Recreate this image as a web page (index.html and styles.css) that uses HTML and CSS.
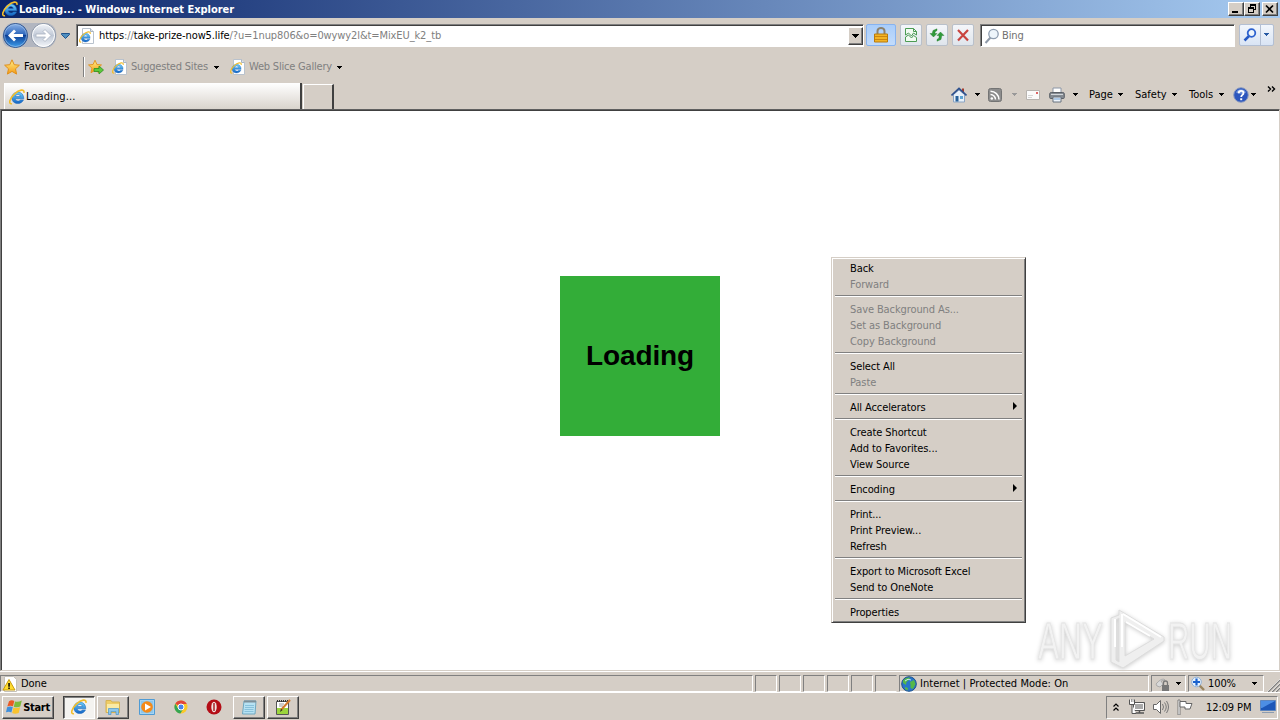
FILE: index.html
```
<!DOCTYPE html>
<html lang="en">
<head>
    <meta charset="UTF-8">
    <title>Loading... - Windows Internet Explorer</title>
    <link rel="stylesheet" href="styles.css">
</head>
<body>
    <svg class="defs" width="0" height="0">
        <defs>
            <linearGradient id="g-blue" x1="0" y1="0" x2="0" y2="1">
                <stop offset="0" stop-color="#8fb4e8"/><stop offset=".45" stop-color="#2f68bd"/><stop offset=".5" stop-color="#0d3f95"/><stop offset="1" stop-color="#3fa0ee"/>
            </linearGradient>
            <linearGradient id="g-grey" x1="0" y1="0" x2="0" y2="1">
                <stop offset="0" stop-color="#f4f6fa"/><stop offset=".5" stop-color="#bfc8d6"/><stop offset="1" stop-color="#f6f8fb"/>
            </linearGradient>
            <linearGradient id="g-gold" x1="0" y1="0" x2="0" y2="1">
                <stop offset="0" stop-color="#fff08a"/><stop offset="1" stop-color="#f59a12"/>
            </linearGradient>
            <linearGradient id="g-ie" x1="0" y1="0" x2="0" y2="1">
                <stop offset="0" stop-color="#6fd0fa"/><stop offset="1" stop-color="#1263c4"/>
            </linearGradient>
        </defs>
        <symbol id="ie" viewBox="0 0 16 16">
            <path fill-rule="evenodd" d="M14.800 9.800H6.300c.2 2.500 4 3 5 1.100h3.200C12.500 16 3.400 16 2.800 9.300 2.500 1.500 14.800.3 14.800 9.800zM6.300 7.500h5c-.3-2.700-4.500-2.700-5 0z" fill="url(#g-ie)" stroke="#1a66b8" stroke-width=".5"/>
            <path d="M3 14.700C-1 15.600.6 9.400 5.600 4.800 10 .8 15.800-.6 14.900 3.800" fill="none" stroke="#f2bd2c" stroke-width="1.600"/>
        </symbol>
        <symbol id="iepage" viewBox="0 0 16 16">
            <path d="M3.500.5h8l3 3v12h-11z" fill="#fff" stroke="#b9c2cd"/>
            <path d="M11.500.5v3h3" fill="#dde4ec" stroke="#a9b4c2"/>
            <use href="#ie" x="0" y="3" width="12" height="12"/>
        </symbol>
        <symbol id="star" viewBox="0 0 16 16">
            <path d="M8 .8l2.200 4.900 5.200.5-3.900 3.600 1.100 5.300L8 12.400l-4.600 2.700 1.100-5.300L.6 6.200l5.200-.5z" fill="url(#g-gold)" stroke="#e08f1a"/>
        </symbol>
        <symbol id="down" viewBox="0 0 5 3"><path d="M0 0h5v1H4v1H3v1H2V2H1V1H0z" fill="currentColor"/></symbol>
    </svg>

    <div class="titlebar">
        <svg class="i16"><use href="#ie"/></svg>
        <span class="title-text">Loading... - Windows Internet Explorer</span>
        <div class="win-buttons">
            <button class="win-btn"><svg width="12" height="10"><path d="M2 7h6v2H2z"/></svg></button>
            <button class="win-btn"><svg width="12" height="10"><path d="M4 0h6v6H8V5h1V2H5v1H4zM2 3h6v6H2zM3 5v3h4V5z" fill-rule="evenodd"/></svg></button>
            <button class="win-btn close"><svg width="12" height="10"><path d="M2 1.500l7 7M9 1.500l-7 7" stroke="#000" stroke-width="1.700"/></svg></button>
        </div>
    </div>

    <div class="navbar">
        <svg class="travel" width="76" height="30" viewBox="0 0 76 30">
            <path d="M13 3H45c15 0 14 21 4 24H10C-2 27 1 3 13 3z" fill="#b2b6c0"/>
            <circle cx="15.500" cy="15.500" r="12" fill="url(#g-blue)" stroke="#33568f"/>
            <circle cx="15.500" cy="15.500" r="11" fill="none" stroke="#a9c9ee" opacity=".6"/>
            <path d="M8 15.500l6-6 2 2-2.500 2.500H23v3h-9.500L16 19.500l-2 2z" fill="#fff"/>
            <circle cx="43.500" cy="15.500" r="12" fill="url(#g-grey)" stroke="#8b95a6"/>
            <circle cx="43.500" cy="15.500" r="11" fill="none" stroke="#fff"/>
            <path d="M51 15.500l-6-6-2 2 2.500 2.500H36v3h9.500L43 19.500l2 2z" fill="#fff" stroke="#a9b2c0" stroke-width=".8"/>
            <path d="M61.500 13.500h8v1l-4 4-4-4z" fill="#4f8fc0" stroke="#20538c"/>
        </svg>
        <div class="field address">
            <svg class="i16"><use href="#iepage"/></svg>
            <span class="url">https<i>://</i>take-prize-now5.life<i class="query">/?u=1nup806&amp;o=0wywy2l&amp;t=MixEU_k2_tb</i></span>
            <button class="drop"><svg width="7" height="4"><path d="M0 0h7v1H6v1H5v1H4v1H3V3H2V2H1V1H0z"/></svg></button>
        </div>
        <button class="tool lock">
            <svg class="i16" viewBox="0 0 16 16"><path d="M4.500 8V4a3.500 3 0 0 1 7 0V8" fill="none" stroke="#8c826e" stroke-width="2"/><path d="M1.500 7h13v8h-13z" fill="#f3b424" stroke="#b97a0c"/><path d="M2 9.500h12M2 12.500h12" stroke="#ca8510"/></svg>
        </button>
        <button class="tool">
            <svg class="i16" viewBox="0 0 16 16"><path d="M2.500 8V1.500h8l3 3V8l-3-2-2 3-3-3zM2.500 10l3-2 3 3 2-2.500 3 2v4h-11z" fill="#f2fbf2" stroke="#4c9c54"/><path d="M10.500 1.500v3h3" fill="none" stroke="#4c9c54"/></svg>
        </button>
        <button class="tool">
            <svg class="i16" viewBox="0 0 16 16"><path d="M1 6.500L4.500 10 8 6.500H6V5l2-1.500V1.800L4 3.500 3.200 6.500zM15 8.500L11.500 5 8 8.500h2V11l-2 1.500v1.700l4-1.700.8-4z" fill="#2f9a3a" stroke="#237a2c" stroke-width=".4"/></svg>
        </button>
        <button class="tool">
            <svg class="i16" viewBox="0 0 16 16"><path d="M3 3l10 10.500M13 3L3 13.500" stroke="#c9443f" stroke-width="2.200"/></svg>
        </button>
        <div class="field search">
            <svg class="i16" viewBox="0 0 16 16"><path d="M6.500 9.500L1.500 15" stroke="#8e99a8" stroke-width="2"/><circle cx="9.500" cy="6" r="4.700" fill="#eef5fb" stroke="#8e9db0" stroke-width="1.300"/></svg>
            <span>Bing</span>
        </div>
        <div class="go">
            <svg class="i16" viewBox="0 0 16 16"><path d="M7 9l-4.500 4.500" stroke="#2659c3" stroke-width="2.500"/><circle cx="9.500" cy="6" r="3.800" fill="#eef5fb" stroke="#2d62cf" stroke-width="1.800"/></svg>
            <span class="go-drop"><svg class="arr"><use href="#down"/></svg></span>
        </div>
    </div>

    <div class="favbar">
        <svg class="i16"><use href="#star"/></svg>
        <span class="fav-label">Favorites</span>
        <span class="divider"></span>
        <svg class="i16" viewBox="0 0 16 16"><use href="#star" width="14" height="15"/><path d="M6 9.500h5V7l4.500 4-4.500 4v-2.500H6z" fill="#5cc93c" stroke="#2d8f1f" stroke-width=".8"/></svg>
        <svg class="i16 fav-ico"><use href="#iepage"/></svg>
        <span class="fav-link sites">Suggested Sites</span>
        <svg class="arr"><use href="#down"/></svg>
        <svg class="i16 fav-ico2"><use href="#iepage"/></svg>
        <span class="fav-link slices">Web Slice Gallery</span>
        <svg class="arr"><use href="#down"/></svg>
    </div>

    <div class="tabrow">
        <div class="tab"><svg class="i16"><use href="#ie"/></svg><span>Loading...</span></div>
        <div class="newtab"></div>
        <div class="commands">
            <svg class="i16" viewBox="0 0 16 16"><path d="M11 1.500h2v5h-2z" fill="#a33b2c"/><path d="M2.500 7.500L8 3l5.500 4.500v7.500h-11z" fill="#e8f1fa" stroke="#8ba4c4"/><path d="M.5 8.500L8 1.500l7.500 7" fill="none" stroke="#2c4f8d" stroke-width="1.700"/><path d="M4.500 9h3v5.500h-3z" fill="#27609a"/><path d="M9 9h3v3H9z" fill="#5ea4d4"/></svg>
            <svg class="arr a-home"><use href="#down"/></svg>
            <svg class="i16 rss" viewBox="0 0 16 16"><rect x="1.500" y="1.500" width="13" height="13" rx="2" fill="#8d8d8d" stroke="#747474"/><circle cx="4.800" cy="11.500" r="1.300" fill="#fff"/><path d="M3.500 7.500a5 5 0 0 1 5 5M3.500 4.200a8.500 8.500 0 0 1 8.500 8.300" fill="none" stroke="#fff" stroke-width="1.500"/></svg>
            <svg class="arr a-rss"><use href="#down"/></svg>
            <svg class="i16 mail" viewBox="0 0 16 16"><path d="M1.500 3.500h13v9h-13z" fill="#fbfbfb" stroke="#b8b4b0"/><path d="M11 5h2v2h-2z" fill="#d66"/><path d="M3 8.500h5M3 10.500h4" stroke="#d5d5d5"/></svg>
            <svg class="i16 printer" viewBox="0 0 16 16"><path d="M4 1h8v5H4z" fill="#fff" stroke="#8b96a6"/><path d="M.7 7q0-1.500 1.500-1.500h11.600q1.500 0 1.500 1.500v3.500q0 1-1 1H1.700q-1 0-1-1z" fill="#858b92" stroke="#5b6067"/><path d="M2 7.500h12" stroke="#d3d7db"/><path d="M4 10h8v5H4z" fill="#eef4fb" stroke="#68727e"/><path d="M5 12h6" stroke="#6c9fd4"/></svg>
            <svg class="arr a-print"><use href="#down"/></svg>
            <span class="cmd page">Page</span><svg class="arr"><use href="#down"/></svg>
            <span class="cmd safety">Safety</span><svg class="arr"><use href="#down"/></svg>
            <span class="cmd tools">Tools</span><svg class="arr"><use href="#down"/></svg>
            <svg class="i16 help" viewBox="0 0 16 16"><circle cx="8" cy="8" r="7.300" fill="#2c56bd" stroke="#8d9cc0"/><path d="M3 5.500a5.500 5.500 0 0 1 10 0Q8 8 3 5.500z" fill="#7598dd"/><path d="M5.700 6.200c0-3.300 4.800-3 4.800-.3C10.500 8 8.200 7.700 8.200 10" fill="none" stroke="#fff" stroke-width="1.800"/><path d="M7.200 11.300h2v1.900h-2z" fill="#fff"/></svg>
            <svg class="arr a-help"><use href="#down"/></svg>
            <svg class="more" width="9" height="6"><path d="M1 .5L3.500 3 1 5.500M5 .5L7.500 3 5 5.500" fill="none" stroke="#000" stroke-width="1.400"/></svg>
        </div>
    </div>

    <div class="viewport">
        <div class="loading">Loading</div>
        <svg class="watermark" width="220" height="70" viewBox="0 0 220 70">
            <g class="wm-text"><text x="3" y="54" textLength="65" lengthAdjust="spacingAndGlyphs">ANY</text><text x="133" y="54" textLength="64" lengthAdjust="spacingAndGlyphs">RUN</text></g>
            <path class="wm-mark" d="M84 5l45 27v4L88 63l-4-2-8-4V13l8-3zM90 17v34l29-17zM81 15v40l3 2V13z"/>
            <path class="wm-light" d="M80 14v28M87 9v33M88 9l38 23M91 17l24 14"/>
        </svg>
    </div>

    <div class="statusbar">
        <div class="pane done">
            <svg class="i16" viewBox="0 0 16 16"><path d="M2.500.5h9l3 3v12h-12z" fill="#fff" stroke="#c5c1b8"/><path d="M7 3.500l6 10.500H1z" fill="#ffdc2e" stroke="#c89b0c"/><path d="M6.300 7h1.500v3.800H6.300zM6.300 11.500h1.500V13H6.300z"/></svg>
            <span>Done</span>
        </div>
        <div class="pane small"></div>
        <div class="pane small"></div>
        <div class="pane small"></div>
        <div class="pane small"></div>
        <div class="pane small"></div>
        <div class="pane small last"></div>
        <div class="pane zone">
            <svg class="i16" viewBox="0 0 16 16"><circle cx="8" cy="8" r="7.300" fill="#2876c9" stroke="#1c4f8c"/><path d="M2 4.500Q5 1 9 1.500L8 4 5.500 6 5 9 2 7zM9 6l4-2 1.500 4-2.500 5-2.500-1V9zM4 11l3 1-.5 2.500L4 13z" fill="#55b848"/><path d="M4 5q3-3 6-1" fill="none" stroke="#c4e9f4"/></svg>
            <span>Internet | Protected Mode: On</span>
        </div>
        <div class="pane filter">
            <svg class="i16" viewBox="0 0 16 16"><path d="M1 8q6-7 9-4l-4 1 2 3-3 3-3-1z" fill="#d9d9d9" stroke="#999" stroke-width=".7"/><path d="M8.500 9V7a2 2 0 0 1 4 0v2" fill="none" stroke="#777" stroke-width="1.300"/><path d="M7 9h7v6H7z" fill="#777"/></svg>
            <svg class="arr"><use href="#down"/></svg>
        </div>
        <div class="pane zoom">
            <svg class="i16" viewBox="0 0 16 16"><path d="M9 9l5 5" stroke="#9a8560" stroke-width="2.400"/><circle cx="6.500" cy="6" r="4.800" fill="#e8f3fd" stroke="#8fb0d6"/><path d="M6.500 2.500v7M3 6h7" stroke="#1a62cd" stroke-width="2.200"/></svg>
            <span>100%</span>
            <svg class="arr"><use href="#down"/></svg>
        </div>
        <svg class="grip" width="13" height="13"><path d="M1 13L13 1M5 13l8-8M9 13l4-4" stroke="#808080" stroke-width="1.500"/><path d="M0 13L13 0M4 13l9-9M8 13l5-5" stroke="#fff" stroke-width=".6"/></svg>
    </div>

    <div class="taskbar">
        <button class="task start">
            <svg class="i16" viewBox="0 0 16 16"><path d="M3 2.300Q5.500.3 8.300 2L7 7.200Q4 6 1.300 7.500z" fill="#ea5a25"/><path d="M9 2.400Q12 3.500 15.800 1.500L14.300 7.500Q11 9 7.800 7.700z" fill="#7dbb3c"/><path d="M1.100 8.300Q4 6.800 6.800 8L5.400 13.500Q3 12 0 13.300z" fill="#3f8fdc"/><path d="M7.500 8.500Q10.500 9.800 14.100 8.300L12.700 14Q9 15.500 6.200 14z" fill="#f9c32f"/></svg>
            <b>Start</b>
        </button>
        <button class="task pressed"><svg class="i16"><use href="#ie"/></svg></button>
        <button class="task folder"><svg class="i16" viewBox="0 0 16 16"><path d="M1 1.500h5l1 1.500h7.500v10.500H1z" fill="#efcd66" stroke="#d5b253"/><path d="M2 5h12v8H2z" fill="#faeaa5"/><path d="M3.500 15.500V9.500h10v6h-2.500v-3H6v3z" fill="#8cc7ec" stroke="#4a93c8" stroke-width=".7"/></svg></button>
        <svg class="i16 media" viewBox="0 0 16 16"><path d="M.5.5h15v15H.5z" fill="#a5d4f3" stroke="#4f9bd4"/><path d="M2 2h12v12H2z" fill="#8cc6ec"/><circle cx="8" cy="8" r="5.800" fill="#f48a19"/><path d="M6 4.500L12 8l-6 3.500z" fill="#fff"/></svg>
        <svg class="i16 chrome" viewBox="0 0 16 16"><circle cx="8" cy="8" r="6.500" fill="#fbc928"/><path d="M8 8L2.300 4.700A6.500 6.500 0 0 1 13.800 5H8z" fill="#e2453a"/><path d="M2.300 4.700A6.500 6.500 0 0 0 7.400 14.500L10.500 9.500 8 11 5.300 9.700z" fill="#35a553"/><circle cx="8" cy="8" r="3" fill="#4a84ec" stroke="#fff"/></svg>
        <svg class="i16 opera" viewBox="0 0 16 16"><circle cx="8" cy="8" r="7.500" fill="#b40d16"/><ellipse cx="8" cy="8" rx="2.700" ry="5.300" fill="#f0e4e2"/><path d="M7.300 4h1.400v8H7.300z" fill="#a5131b"/></svg>
        <button class="task notepad"><svg class="i16" viewBox="0 0 16 16"><path d="M3 2h12l-1 13H1.500z" fill="#b7e2f3" stroke="#6fa7c0"/><path d="M3 1.500h12v2H3z" fill="#7e8f98"/><path d="M4 6.500h9M4 8.500h9M3.500 10.500h9M3.500 12.500h9" stroke="#74b3d0" stroke-width=".7"/></svg></button>
        <button class="task npp"><svg class="i16" viewBox="0 0 16 16"><path d="M1.500 2.500h12v13h-12z" fill="#fff" stroke="#555"/><path d="M2 9h11v6H2z" fill="#9bd43c"/><path d="M2 2h11" stroke="#333" stroke-dasharray="1 1" stroke-width="2"/><path d="M4 5h5M4 7h4" stroke="#999"/><path d="M6 11L15 1" stroke="#d2792b" stroke-width="2"/><path d="M5 13l1-3 1.500 1z" fill="#222"/></svg></button>
        <div class="tray">
            <svg class="chev" width="6" height="8"><path d="M.5 3.500L3 1l2.500 2.500M.5 7.500L3 5l2.500 2.500" fill="none" stroke="#000" stroke-width="1.200"/></svg>
            <svg class="i16 net" viewBox="0 0 16 16"><path d="M4.500 3.500h11v8h-11z" fill="#888" stroke="#555"/><path d="M5.500 4.500h9v6h-9z" fill="#aaa" stroke="#fff"/><path d="M6 14h9M10.500 12v2" stroke="#555" stroke-width="1.500"/><path d="M.5.5v5h5v-5M3 5v9.500h4" fill="#fff" stroke="#555"/><path d="M2.500 0v3M4 0v3" stroke="#777" stroke-width=".7"/></svg>
            <svg class="i16 vol" viewBox="0 0 16 16"><path d="M.5 5.500h3l4-4v13l-4-4h-3z" fill="#fff" stroke="#666"/><path d="M9.500 5q2 3 0 6M11.500 3.500q3.500 4.500 0 9M13.500 2q4 6 0 12" fill="none" stroke="#777"/></svg>
            <svg class="i16 flag" viewBox="0 0 16 16"><path d="M1 1h2v15H1z" fill="#fff" stroke="#666" stroke-width=".8"/><path d="M3 2.500h6v2h6l-2 5.500H8V8H3z" fill="#fff" stroke="#666"/></svg>
            <span class="clock">12:09 PM</span>
            <svg class="i16" viewBox="0 0 16 16"><path d="M.5 1.500h15v10H.5z" fill="#1d57b8" stroke="#5f86bd"/><path d="M1 2h14L2 9H1z" fill="#4d8ee4"/><path d="M2 13.500h12" stroke="#8c9cb0"/></svg>
        </div>
    </div>

    <div class="menu">
        <div class="item">Back</div>
        <div class="item off">Forward</div>
        <hr>
        <div class="item off">Save Background As...</div>
        <div class="item off">Set as Background</div>
        <div class="item off">Copy Background</div>
        <hr>
        <div class="item">Select All</div>
        <div class="item off">Paste</div>
        <hr>
        <div class="item sub">All Accelerators</div>
        <hr>
        <div class="item">Create Shortcut</div>
        <div class="item">Add to Favorites...</div>
        <div class="item">View Source</div>
        <hr>
        <div class="item sub">Encoding</div>
        <hr>
        <div class="item">Print...</div>
        <div class="item">Print Preview...</div>
        <div class="item">Refresh</div>
        <hr>
        <div class="item">Export to Microsoft Excel</div>
        <div class="item">Send to OneNote</div>
        <hr>
        <div class="item">Properties</div>
    </div>
</body>
</html>
```
FILE: styles.css
```
* {
    box-sizing: border-box;
}
body {
    margin: 0;
    width: 1280px;
    height: 720px;
    overflow: hidden;
    display: flex;
    flex-direction: column;
    position: relative;
    background: #d5cec6;
    color: #000;
    font: 11px/14px "DejaVu Sans Condensed", "DejaVu Sans", sans-serif;
    letter-spacing: -0.1px;
    white-space: nowrap;
}
svg {
    display: block;
    flex: none;
}
.defs {
    position: absolute;
}
.i16 {
    width: 16px;
    height: 16px;
}
.arr {
    width: 5px;
    height: 3px;
}
button {
    padding: 0;
    border: none;
    font: inherit;
    letter-spacing: inherit;
    flex: none;
}

/* title bar */
.titlebar {
    height: 18px;
    display: flex;
    align-items: center;
    padding: 0 2px;
    background: linear-gradient(to right, #0a246a, #a6caf0);
    color: #fff;
    font-weight: bold;
}
.title-text {
    margin-left: 1px;
    padding-top: 1px;
    flex: 1;
    letter-spacing: -0.03px;
}
.win-buttons {
    display: flex;
}
.win-btn {
    width: 16px;
    height: 14px;
    padding: 1px;
    background: #d5cec6;
    border: 1px solid;
    border-color: #fff #404040 #404040 #fff;
    box-shadow: inset -1px -1px #808080;
}
.close {
    margin-left: 2px;
}

/* address row */
.navbar {
    height: 36px;
    display: flex;
    align-items: flex-start;
    padding-top: 6px;
}
.travel {
    margin-top: -4px;
}
.field {
    height: 23px;
    display: flex;
    align-items: center;
    background: #fff;
    border: 1px solid;
    border-color: #808080 #fff #fff #808080;
    box-shadow: inset 1px 1px #404040;
}
.address {
    width: 788px;
    padding-left: 2px;
}
.url {
    flex: 1;
    margin-left: 4px;
    padding-top: 1px;
}
.url i {
    font-style: normal;
    color: #808080;
}
.drop {
    width: 15px;
    height: 18px;
    padding: 6px 3px;
    background: #d5cec6;
    border: 1px solid;
    border-color: #fff #404040 #404040 #fff;
    box-shadow: inset -1px -1px #808080;
}
.tool {
    width: 22px;
    height: 22px;
    margin-right: 4px;
    display: flex;
    align-items: center;
    justify-content: center;
    background: linear-gradient(#f4f6fa, #dfe5ec);
    border: 1px solid #b9c0ca;
    border-radius: 2px;
}
.lock {
    width: 30px;
    margin-left: 2px;
    background: linear-gradient(#a9cdfa, #c3dcfb);
    border-color: #86b3f0;
}
.search {
    width: 255px;
    margin-left: 2px;
    padding-left: 3px;
    color: #707070;
}
.search span {
    margin-left: 2px;
    padding-top: 1px;
}
.go {
    width: 35px;
    height: 22px;
    margin-left: 4px;
    padding-left: 2px;
    display: flex;
    align-items: center;
    background: linear-gradient(#f2f6fc, #d9e4f4);
    border: 1px solid #b3bfd3;
    border-radius: 2px;
}
.go-drop {
    height: 20px;
    margin-left: 2px;
    padding: 8px 0 0 3px;
    border-left: 1px solid #b3bfd3;
    color: #2659a3;
}

/* favorites row */
.favbar {
    height: 26px;
    display: flex;
    align-items: center;
    padding-left: 4px;
}
.fav-label {
    width: 59px;
    margin-left: 4px;
    letter-spacing: 0.1px;
}
.divider {
    width: 2px;
    height: 20px;
    margin-right: 3px;
    border-left: 1px solid #808080;
    border-right: 1px solid #fff;
}
.fav-ico {
    margin-left: 8px;
}
.fav-link {
    color: #808080;
    margin-left: 3px;
    letter-spacing: -0.2px;
}
.sites {
    width: 83px;
}
.fav-ico2 {
    margin-left: 11px;
}
.slices {
    width: 88px;
}

/* tabs and command bar */
.tabrow {
    height: 29px;
    display: flex;
    align-items: flex-end;
    padding-left: 4px;
}
.tab {
    width: 298px;
    height: 26px;
    display: flex;
    align-items: center;
    padding: 1px 0 0 4px;
    background: linear-gradient(#fff, #d9d4cd);
    border-left: 1px solid #fff;
    border-right: 2px solid #404040;
}
.tab span {
    margin-left: 1px;
    letter-spacing: 0.1px;
}
.newtab {
    width: 31px;
    height: 25px;
    margin-left: 1px;
    border: solid #fff;
    border-width: 1px 2px 0 1px;
    border-right-color: #404040;
}
.commands {
    flex: 1;
    height: 29px;
    display: flex;
    align-items: center;
    padding-left: 617px;
}
.a-home { margin-left: 8px; }
.rss { margin-left: 7px; }
.a-rss { margin-left: 9px; color: #999; }
.mail { margin-left: 8px; }
.printer { margin-left: 8px; }
.a-print { margin-left: 8px; }
.cmd { margin-left: 11px; letter-spacing: 0; }
.page { width: 29px; }
.safety { width: 37px; margin-left: 12px; }
.tools { width: 30px; margin-left: 12px; }
.help { margin-left: 9px; }
.a-help { margin-left: 2px; }
.more {
    margin: 0 0 12px 11px;
}

/* page */
.viewport {
    height: 562px;
    display: flex;
    align-items: center;
    justify-content: center;
    background: #fff;
    border: 1px solid;
    border-color: #606060 #d5cec6 #d5cec6 #808080;
    box-shadow: inset 1px 1px #404040;
    padding-bottom: 68px;
}
.loading {
    width: 160px;
    height: 160px;
    line-height: 160px;
    text-align: center;
    background: #33ad38;
    font-family: "Liberation Sans", Arial, sans-serif;
    font-size: 28px;
    font-weight: bold;
    letter-spacing: -0.1px;
}
.watermark {
    position: absolute;
    left: 1035px;
    top: 605px;
    filter: drop-shadow(0 1px 2px #ccc);
}
.wm-text {
    font: 52px "Liberation Sans", Arial, sans-serif;
    letter-spacing: 0;
    fill: #f2f2f2;
    stroke: #e4e4e4;
    stroke-width: 0.8px;
}
.wm-mark {
    fill: #efefef;
    fill-rule: evenodd;
    stroke: #ddd;
}
.wm-light {
    fill: none;
    stroke: #fff;
    stroke-width: 2px;
}

/* status bar */
.statusbar {
    height: 22px;
    display: flex;
    gap: 2px;
    padding-top: 3px;
    border-top: 1px solid #fff;
    border-bottom: 1px solid #fff;
}
.pane {
    display: flex;
    align-items: center;
    border: 1px solid;
    border-color: #808080 #fff #fff #808080;
}
.pane span {
    margin-left: 3px;
}
.done {
    width: 753px;
    padding-left: 1px;
}
.small {
    width: 22px;
}
.last {
    border-right-color: #d5cec6;
}
.zone {
    width: 250px;
    padding-left: 1px;
    letter-spacing: 0.05px;
}
.filter {
    width: 35px;
    padding-left: 3px;
    gap: 5px;
}
.zoom {
    width: 76px;
    padding-left: 1px;
}
.zoom span {
    width: 44px;
    margin-left: 2px;
}
.grip {
    margin: 4px 0 0 1px;
}

/* taskbar */
.taskbar {
    height: 27px;
    display: flex;
    align-items: center;
    padding: 1px 2px 0;
}
.task {
    width: 32px;
    height: 23px;
    display: flex;
    align-items: center;
    justify-content: center;
    background: #d5cec6;
    border: 1px solid;
    border-color: #fff #404040 #404040 #fff;
    box-shadow: inset -1px -1px #808080;
}
.start {
    width: 52px;
    gap: 1px;
    margin-right: 9px;
    letter-spacing: -0.3px;
}
.start b {
    padding-top: 1px;
}
.pressed {
    background: #f4f3f0;
    border-color: #404040 #fff #fff #404040;
    box-shadow: inset 1px 1px #808080;
}
.folder { margin-left: 2px; }
.media { margin-left: 10px; }
.chrome { margin-left: 18px; }
.opera { margin-left: 17px; }
.notepad { margin-left: 11px; }
.npp { margin-left: 2px; }
.tray {
    width: 172px;
    height: 23px;
    margin-left: auto;
    display: flex;
    align-items: center;
    padding-left: 6px;
    border: 1px solid;
    border-color: #808080 #fff #fff #808080;
}
.net { margin-left: 10px; }
.vol { margin-left: 8px; }
.flag { margin-left: 8px; }
.clock {
    width: 53px;
    margin-left: 13px;
    margin-right: 1px;
    padding-top: 1px;
}

/* context menu */
.menu {
    position: absolute;
    left: 831px;
    top: 257px;
    width: 195px;
    padding: 2px;
    background: #d5cec6;
    border: 1px solid;
    border-color: #d5cec6 #404040 #404040 #d5cec6;
    box-shadow: inset 1px 1px #fff, inset -1px -1px #808080;
}
.item {
    height: 16px;
    line-height: 16px;
    padding: 2px 0 0 16px;
    display: flex;
    align-items: center;
}
.off {
    color: #808080;
}
.sub::after {
    content: "";
    margin: -4px 6px 0 auto;
    border: 4px solid transparent;
    border-left-color: #000;
    border-right: none;
}
.menu hr {
    height: 2px;
    margin: 3px 1px 4px;
    border: none;
    border-top: 1px solid #808080;
    border-bottom: 1px solid #fff;
}
```
